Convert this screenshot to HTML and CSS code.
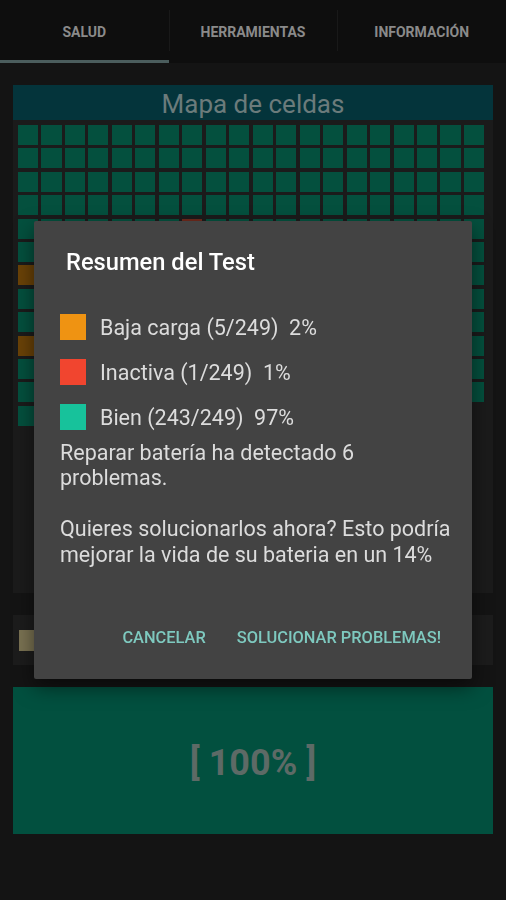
FILE: index.html
```html
<!DOCTYPE html>
<html lang="es">
<head>
    <meta charset="UTF-8">
    <meta name="viewport" content="width=device-width, initial-scale=1.0">
    <title>Salud de la batería</title>
    <link rel="stylesheet" href="styles.css">
</head>
<body>

<nav class="tabs">
    <div class="tab active">SALUD</div>
    <div class="tab">HERRAMIENTAS</div>
    <div class="tab">INFORMACIÓN</div>
</nav>

<main class="content">
    <section class="map-card">
        <h2 class="map-title">Mapa de celdas</h2>
        <div class="cells" id="cells"></div>
    </section>

    <section class="legend-card">
        <span class="legend-swatch"></span>
    </section>

    <div class="charge-bar">[ 100% ]</div>
</main>

<!-- Test summary dialog -->
<div class="scrim">
    <div class="dialog">
        <h3 class="dialog-title">Resumen del Test</h3>
        <ul class="summary">
            <li><span class="swatch low"></span>Baja carga (5/249)&nbsp; 2%</li>
            <li><span class="swatch dead"></span>Inactiva (1/249)&nbsp; 1%</li>
            <li><span class="swatch good"></span>Bien (243/249)&nbsp; 97%</li>
        </ul>
        <p class="message">Reparar batería ha detectado 6 problemas.<br><br>Quieres solucionarlos ahora? Esto podría mejorar la vida de su bateria en un 14%</p>
        <div class="actions">
            <button class="action">CANCELAR</button>
            <button class="action">SOLUCIONAR PROBLEMAS!</button>
        </div>
    </div>
</div>

<script>
    const cells = document.getElementById('cells');
    const total = 249;
    // index -> state, everything else is fine
    const problems = { 87: 'dead', 120: 'low', 180: 'low', 170: 'low', 205: 'low', 234: 'low' };

    for (let i = 0; i < total; i++) {
        const cell = document.createElement('span');
        cell.className = 'cell ' + (problems[i] || 'good');
        cells.appendChild(cell);
    }
</script>

</body>
</html>
```

FILE: styles.css
```css
body {
    font-family: Roboto, "Noto Sans", sans-serif;
    background-color: #141414;
    margin: 0;
    padding: 0;
    width: 506px;
    height: 900px;
    overflow: hidden;
}
.tabs {
    display: grid;
    grid-template-columns: 1fr 1fr 1fr;
    height: 63px;
    background-color: #0e0e0e;
}
.tab {
    position: relative;
    display: flex;
    align-items: center;
    justify-content: center;
    padding-top: 3px;
    font-size: 14px;
    font-weight: 700;
    color: #8a8a8a;
    border-bottom: 3px solid transparent;
}
.tab + .tab::before {
    content: "";
    position: absolute;
    left: 0;
    top: 10px;
    bottom: 9px;
    width: 1px;
    background-color: #191919;
}
.tab.active {
    border-bottom-color: #4b5d5d;
}
.content {
    padding: 22px 13px 0;
}
.map-card {
    height: 508px;
    background-color: #1b1b1b;
}
.map-title {
    margin: 0;
    height: 35px;
    line-height: 39px;
    text-align: center;
    font-size: 26px;
    font-weight: 400;
    color: #6b7b7b;
    background-color: #04343b;
}
.cells {
    display: grid;
    grid-template-columns: repeat(20, 1fr);
    grid-auto-rows: 20px;
    gap: 3.4px 3.4px;
    padding: 5px 9px 0 5px;
}
.cell.good {
    background-color: #04503e;
}
.cell.low {
    background-color: #6a4207;
}
.cell.dead {
    background-color: #6e2a1c;
}
.legend-card {
    display: flex;
    align-items: center;
    height: 50px;
    margin-top: 22px;
    padding-left: 6px;
    background-color: #1c1c1c;
}
.legend-swatch {
    width: 20px;
    height: 21px;
    background-color: #7a7252;
}
.charge-bar {
    display: flex;
    align-items: center;
    justify-content: center;
    height: 147px;
    margin-top: 22px;
    padding-top: 4px;
    box-sizing: border-box;
    font-size: 36px;
    font-weight: 700;
    color: #5d6a66;
    background-color: #02503f;
}
.scrim {
    position: fixed;
    inset: 0;
}
.dialog {
    position: absolute;
    left: 34px;
    top: 221px;
    width: 438px;
    height: 458px;
    box-sizing: border-box;
    display: flex;
    flex-direction: column;
    padding: 27px 20px 24px 26px;
    background-color: #434343;
    border-radius: 2px;
    box-shadow: 0 8px 20px rgba(0, 0, 0, 0.5);
}
.dialog-title {
    margin: 0 0 0 6px;
    font-size: 23.7px;
    line-height: 28px;
    font-weight: 500;
    color: #ffffff;
}
.summary {
    list-style: none;
    margin: 28.5px 0 0;
    padding: 0;
}
.summary li {
    display: flex;
    align-items: center;
    gap: 14px;
    height: 45px;
    font-size: 21.5px;
    color: #dcdcdc;
}
.swatch {
    width: 26px;
    height: 26px;
}
.swatch.low {
    background-color: #ef9312;
}
.swatch.dead {
    background-color: #f1452f;
}
.swatch.good {
    background-color: #17c29b;
}
.message {
    margin: 0;
    font-size: 21.5px;
    line-height: 25.5px;
    color: #dcdcdc;
}
.actions {
    display: flex;
    justify-content: flex-end;
    gap: 9px;
    margin-top: auto;
}
.action {
    height: 36px;
    padding: 0 11px;
    border: none;
    background: none;
    font-family: inherit;
    font-size: 16.4px;
    font-weight: 500;
    color: #7ec9bf;
}
```
